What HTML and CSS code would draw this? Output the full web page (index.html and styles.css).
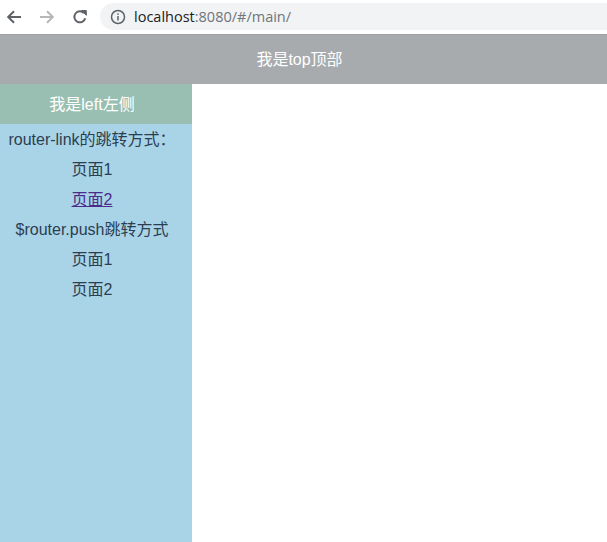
FILE: index.html
```html
<!DOCTYPE html>
<html>
<head>
<meta charset="utf-8">
<link rel="stylesheet" href="styles.css">
</head>
<body>
<div class="toolbar">
  <div class="nav">
    <svg class="navbtn" width="18" height="18" viewBox="0 0 18 18"><path d="M16 9H3.5M9 3.2L3.2 9L9 14.8" fill="none" stroke="#5f6368" stroke-width="2"/></svg>
    <svg class="navbtn" width="18" height="18" viewBox="0 0 18 18"><path d="M2 9h12.5M9 3.2L14.8 9L9 14.8" fill="none" stroke="#b5b7ba" stroke-width="2"/></svg>
    <svg class="navbtn" width="18" height="18" viewBox="0 0 18 18"><path d="M14.2 10.2A5.5 5.5 0 1 1 13 5.2" fill="none" stroke="#5f6368" stroke-width="2"/><path d="M10.5 2.5H15.3V7.3Z" fill="#5f6368" stroke="#5f6368" stroke-width="1"/></svg>
  </div>
  <div class="omnibox">
    <svg class="info" width="16" height="16" viewBox="0 0 16 16"><circle cx="8" cy="8" r="6.5" fill="none" stroke="#5f6368" stroke-width="1.5"/><rect x="7.25" y="7" width="1.5" height="4.5" fill="#5f6368"/><rect x="7.25" y="4.3" width="1.5" height="1.5" fill="#5f6368"/></svg>
    <span class="host">localhost</span><span class="path">:8080/#/main/</span>
  </div>
</div>
<div class="app">
  <header class="top">我是top顶部</header>
  <div class="body">
    <aside class="left">
      <div class="left-title">我是left左侧</div>
      <ul class="menu">
        <li>router-link的跳转方式：</li>
        <li>页面1</li>
        <li><a href="#" class="link">页面2</a></li>
        <li>$router.push跳转方式</li>
        <li>页面1</li>
        <li>页面2</li>
      </ul>
    </aside>
    <main class="main"></main>
  </div>
</div>
</body>
</html>
```
FILE: styles.css
```css
html, body {
  margin: 0;
  padding: 0;
  height: 100%;
  background: #fff;
}
body {
  display: flex;
  flex-direction: column;
  font-family: "Liberation Sans", "Noto Sans CJK SC", sans-serif;
  overflow: hidden;
}
.toolbar {
  height: 34px;
  display: flex;
  align-items: center;
  background: #fff;
  flex: none;
}
.nav {
  display: flex;
  align-items: center;
  gap: 15px;
  padding-left: 5px;
  width: 95px;
}
.navbtn {
  display: block;
}
.omnibox {
  flex: 1;
  height: 27px;
  margin-top: -1px;
  background: #f1f3f4;
  border-radius: 14px 0 0 14px;
  display: flex;
  align-items: center;
  padding-left: 10px;
  font-family: "Open Sans", "Noto Sans", sans-serif;
  font-size: 14.5px;
}
.info {
  margin-right: 8px;
}
.host {
  color: #202124;
}
.path {
  color: #70757a;
}
.app {
  flex: 1;
  display: flex;
  flex-direction: column;
}
.top {
  height: 50px;
  line-height: 48px;
  padding: 1px 8px 0 0;
  background: #a7abad;
  border-top: 1px solid #9da1a3;
  box-sizing: border-box;
  color: #fff;
  text-align: center;
  font-size: 16px;
}
.body {
  flex: 1;
  display: flex;
}
.left {
  width: 192px;
  box-sizing: border-box;
  padding-right: 8px;
  background: #a9d4e8;
  text-align: center;
  color: #2c3e50;
}
.left-title {
  height: 40px;
  line-height: 40px;
  padding-top: 1px;
  box-sizing: border-box;
  margin-right: -8px;
  padding-right: 8px;
  background: #99bfb2;
  color: #fff;
  font-size: 16px;
}
.menu {
  list-style: none;
  margin: 0;
  padding: 1px 0 0;
  font-size: 16px;
}
.menu li {
  height: 30px;
  line-height: 30px;
}
.link {
  color: #4b2a8c;
  text-decoration: underline;
}
.main {
  flex: 1;
  background: #fff;
}
```
